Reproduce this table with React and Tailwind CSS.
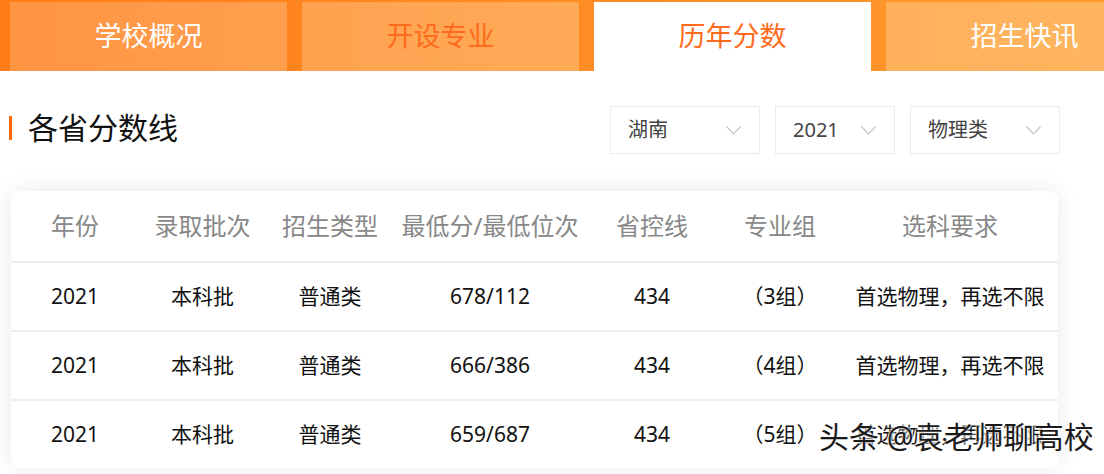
const tabs = [
  { label: '学校概况', cls: 'bg-gradient-to-r from-[#ff9443] to-[#ff9f4e] text-white' },
  { label: '开设专业', cls: 'bg-gradient-to-r from-[#ffa250] to-[#ffaa57] text-[#ff6a1c]' },
  { label: '历年分数', cls: 'bg-white text-[#ff6a1c]' },
  { label: '招生快讯', cls: 'bg-gradient-to-r from-[#ffb05b] to-[#ffb660] text-white' },
];

const selects = [
  { label: '湖南', w: 'w-[150px]' },
  { label: '2021', w: 'w-[120px]' },
  { label: '物理类', w: 'w-[150px]' },
];

const cols = ['w-[128px]', 'w-[127px]', 'w-[128px]', 'w-[192px]', 'w-[132px]', 'w-[124px]', 'flex-1'];
const heads = ['年份', '录取批次', '招生类型', '最低分/最低位次', '省控线', '专业组', '选科要求'];
const rows = [
  ['2021', '本科批', '普通类', '678/112', '434', '（3组）', '首选物理，再选不限'],
  ['2021', '本科批', '普通类', '666/386', '434', '（4组）', '首选物理，再选不限'],
  ['2021', '本科批', '普通类', '659/687', '434', '（5组）', '首选物理，再选不限'],
];

function Chevron() {
  return (
    <svg width="15" height="9" viewBox="0 0 15 9" fill="none" stroke="#c2c2c2" strokeWidth="1.1">
      <polyline points="0.5,0.5 7.5,8 14.5,0.5" />
    </svg>
  );
}

export default function App() {
  return (
    <div className="relative w-[1104px] h-[474px] overflow-hidden bg-white font-['Noto_Sans','Noto_Sans_CJK_SC',sans-serif]">
      {/* Tabs */}
      <div className="flex h-[71px] pt-[2px] pl-[10px] gap-[15px] bg-gradient-to-r from-[#ff7c16] to-[#ff9a2e] overflow-hidden">
        {tabs.map((t) => (
          <div key={t.label} className={`w-[277px] shrink-0 flex items-center justify-center text-[27px] ${t.cls}`}>
            {t.label}
          </div>
        ))}
      </div>

      {/* Title + filters */}
      <div className="flex items-center justify-between pl-[9px] pr-[44px] mt-[35px] h-[48px]">
        <div className="flex items-center mb-[5px]">
          <span className="w-[3px] h-[24px] bg-[#ff6a10]"></span>
          <h2 className="ml-[16px] text-[30px] text-[#111] leading-none">各省分数线</h2>
        </div>
        <div className="flex gap-[15px]">
          {selects.map((s) => (
            <div key={s.label} className={`${s.w} h-[48px] border border-[#ebebeb] flex items-center justify-between pl-[17px] pr-[18px] text-[20px] text-[#444]`}>
              <span>{s.label}</span>
              <Chevron />
            </div>
          ))}
        </div>
      </div>

      {/* Table card */}
      <div className="ml-[11px] mt-[37px] w-[1047px] rounded-[9px] bg-white shadow-[0_0_24px_rgba(0,0,0,0.09)] overflow-hidden">
        <div className="flex h-[70px] items-center text-[24px] text-[#888]">
          {heads.map((h, i) => (
            <div key={h} className={`${cols[i]} text-center`}>{h}</div>
          ))}
        </div>
        {rows.map((r, ri) => (
          <div key={ri} className="flex h-[69px] items-center border-t-2 border-[#eeeeee] text-[21px] text-[#111]">
            {r.map((c, i) => (
              <div key={i} className={`${cols[i]} text-center`}>{c}</div>
            ))}
          </div>
        ))}
      </div>

      {/* Watermark */}
      <div className="absolute left-[819px] top-[414px] text-[30px] text-[#1a1a1a] whitespace-nowrap [text-shadow:0_0_2px_#fff,0_0_2px_#fff,0_0_3px_#fff]">
        头条 @袁老师聊高校
      </div>
    </div>
  );
}
